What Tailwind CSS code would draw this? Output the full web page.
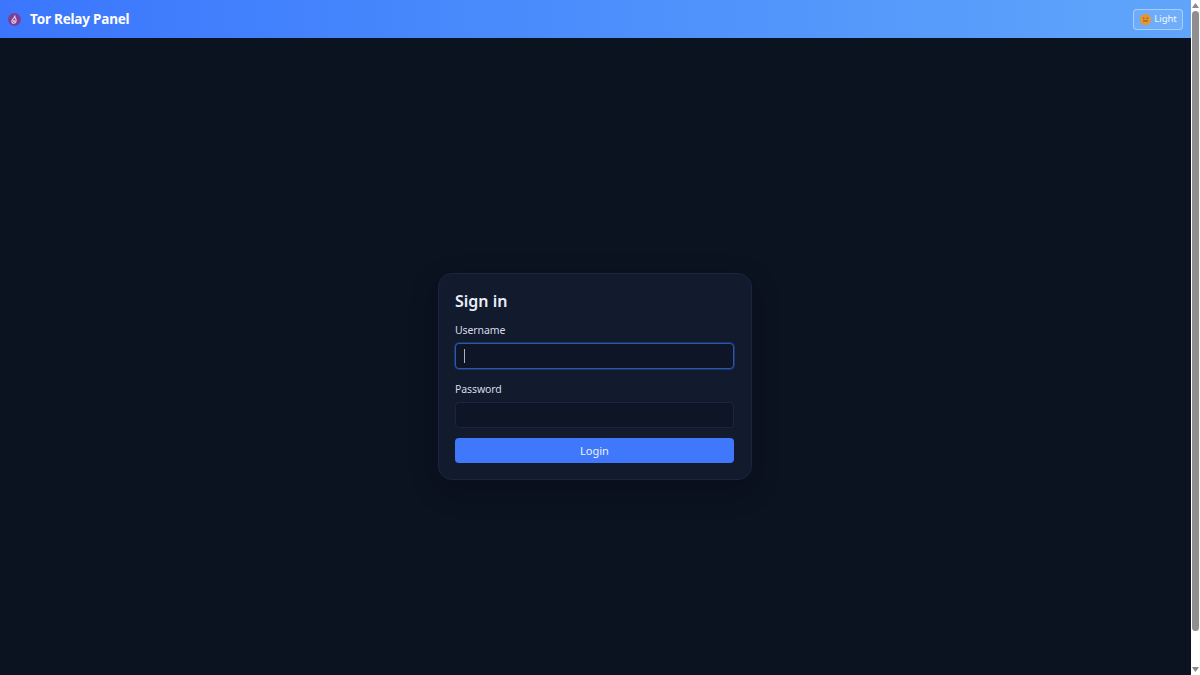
<!DOCTYPE html>
<html lang="en">
<head>
<meta charset="utf-8">
<title>Tor Relay Panel</title>
<script src="https://cdn.jsdelivr.net/npm/@tailwindcss/browser@4"></script>
</head>
<body class="overflow-hidden bg-[#0b1220]">
<div class="flex h-[675px] w-[1200px] font-['Noto_Sans','Open_Sans',sans-serif]">
  <div class="flex w-[1191px] flex-col">
    <header class="flex h-[38px] items-center justify-between bg-gradient-to-r from-[#3b76fd] to-[#60a5fa] pl-[8px] pr-[8px]">
      <div class="flex items-center gap-[9px]">
        <svg width="13" height="13" viewBox="0 0 13 13" class="mt-[1px]">
          <circle cx="6.5" cy="6.5" r="6.5" fill="#7d3f95"/>
          <path d="M7 2.5C6 4 7.5 4.5 8 6.5c.4 2-.8 3.8-2.2 3.8C4.3 10.300 3.600 8.800 4 7.300 4.300 6.200 5.500 5.800 6 5 6.400 4.300 6.500 3.300 7 2.500Z" fill="none" stroke="#e6d5ee" stroke-width="1.100"/>
          <circle cx="6" cy="8" r="1" fill="#e6d5ee"/>
        </svg>
        <span class="text-[13.5px] leading-[20px] font-bold tracking-[-0.2px] text-white">Tor Relay Panel</span>
      </div>
      <button class="flex h-[21px] w-[50px] items-center justify-center gap-[3px] rounded-[4px] border border-white/40 bg-white/10 pl-[1px] text-[9.5px] text-white/90">
        <svg width="11" height="11" viewBox="0 0 10 10">
          <circle cx="5" cy="5" r="5" fill="#e8952e"/>
          <circle cx="3.400" cy="3.900" r=".7" fill="#7d5a1e"/>
          <circle cx="6.600" cy="3.900" r=".7" fill="#7d5a1e"/>
          <path d="M2.800 6.300h4.400" stroke="#7d5a1e" stroke-width=".9"/>
        </svg>
        <span>Light</span>
      </button>
    </header>
    <main class="flex flex-1 justify-center pt-[235px] pr-[1px]">
      <form class="flex h-[207px] w-[314px] flex-col rounded-[14px] border border-[#1b2540] bg-[#121a2e] pl-[16px] pr-[17px] pt-[15px] shadow-[0_10px_30px_rgba(0,0,0,0.2)]">
        <h1 class="text-[16px] leading-[24px] font-semibold text-[#e8edf7]">Sign in</h1>
        <label class="mt-[9px] text-[10.5px] leading-[16px] tracking-[-0.1px] text-[#d5dbe6]">Username</label>
        <div class="mt-[5px] flex h-[26px] items-center rounded-[4px] border border-[#2a56ad] bg-[#0e1526] pl-[8px] shadow-[0_0_0_1px_rgba(42,86,173,0.45)]">
          <span class="h-[14px] w-[1px] bg-[#a8b1c2]"></span>
        </div>
        <label class="mt-[12px] text-[10.5px] leading-[16px] tracking-[-0.1px] text-[#d5dbe6]">Password</label>
        <div class="mt-[5px] h-[26px] rounded-[4px] border border-[#1b2540] bg-[#0e1526]"></div>
        <button class="mt-[10px] h-[25px] rounded-[4px] bg-[#3f78fb] pt-[1px] text-[11px] text-[#eef2fa]">Login</button>
      </form>
    </main>
  </div>
  <aside class="flex h-full w-[9px] flex-col items-center justify-between bg-white">
    <div class="flex w-full flex-1 flex-col items-center">
      <svg width="9" height="9" viewBox="0 0 9 9" class="mt-[1px] shrink-0"><path d="M4.500 2 8 7H1Z" fill="#8a8a8a"/></svg>
      <div class="mt-[1px] h-[620px] w-[7px] rounded-[4px] bg-[#8f8f8f]"></div>
    </div>
    <svg width="9" height="9" viewBox="0 0 9 9" class="mb-[1px] shrink-0"><path d="M4.500 7 8 2H1Z" fill="#8a8a8a"/></svg>
  </aside>
</div>
</body>
</html>
